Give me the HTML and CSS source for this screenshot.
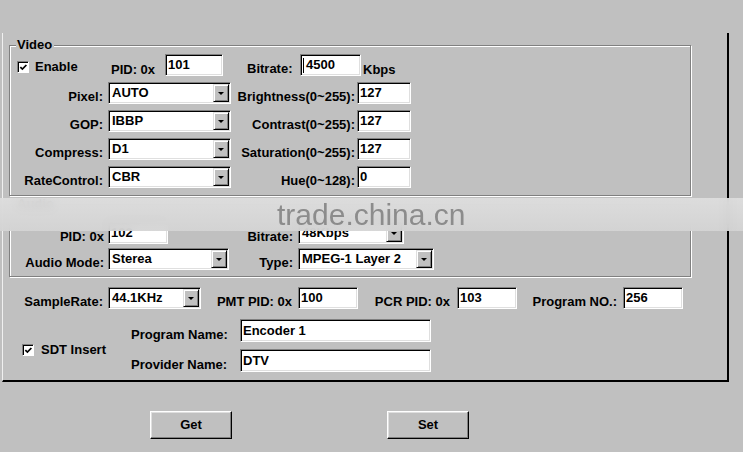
FILE: index.html
```html
<!DOCTYPE html>
<html>

<head>
    <title>Encoder Settings</title>
    <link rel="stylesheet" href="styles.css">
</head>

<body>

    <div class="panel">
        <div class="group video">
            <span class="legend">Video</span>
            <div class="row">
                <label class="enable"><span class="check"><svg viewBox="0 0 10 10"><polyline points="1.5,4.5 3.8,6.8 8.2,2.2" /></svg></span>Enable</label>
                <span class="lbl pid-lbl">PID: 0x</span>
                <span class="field w58">101</span>
                <span class="lbl bit-lbl">Bitrate:</span>
                <span class="field w61"><i class="caret"></i>4500</span>
                <span class="lbl unit">Kbps</span>
            </div>
            <div class="row">
                <span class="lbl va">Pixel:</span>
                <span class="combo w123">AUTO<b class="drop"></b></span>
                <span class="lbl vb">Brightness(0~255):</span>
                <span class="field w54">127</span>
            </div>
            <div class="row">
                <span class="lbl va">GOP:</span>
                <span class="combo w123">IBBP<b class="drop"></b></span>
                <span class="lbl vb">Contrast(0~255):</span>
                <span class="field w54">127</span>
            </div>
            <div class="row">
                <span class="lbl va">Compress:</span>
                <span class="combo w123">D1<b class="drop"></b></span>
                <span class="lbl vb">Saturation(0~255):</span>
                <span class="field w54">127</span>
            </div>
            <div class="row">
                <span class="lbl va">RateControl:</span>
                <span class="combo w123">CBR<b class="drop"></b></span>
                <span class="lbl vb">Hue(0~128):</span>
                <span class="field w54">0</span>
            </div>
        </div>

        <div class="group audio">
            <span class="legend">Audio</span>
            <div class="row">
                <span class="lbl aa">PID: 0x</span>
                <span class="field w60">102</span>
                <span class="lbl ab">Bitrate:</span>
                <span class="combo w106">48Kbps<b class="drop"></b></span>
            </div>
            <div class="row">
                <span class="lbl aa">Audio Mode:</span>
                <span class="combo w121">Sterea<b class="drop"></b></span>
                <span class="lbl ac">Type:</span>
                <span class="combo w136">MPEG-1 Layer 2<b class="drop"></b></span>
            </div>
        </div>

        <div class="row sample">
            <span class="lbl sr">SampleRate:</span>
            <span class="combo w93">44.1KHz<b class="drop"></b></span>
            <span class="lbl pmt">PMT PID: 0x</span>
            <span class="field w60">100</span>
            <span class="lbl pcr">PCR PID: 0x</span>
            <span class="field w60">103</span>
            <span class="lbl pno">Program NO.:</span>
            <span class="field w60">256</span>
        </div>

        <div class="names">
            <label class="sdt"><span class="check"><svg viewBox="0 0 10 10"><polyline points="1.5,4.5 3.8,6.8 8.2,2.2" /></svg></span>SDT Insert</label>
            <div class="name-grid">
                <span class="lbl">Program Name:</span>
                <span class="field">Encoder 1</span>
                <span class="lbl">Provider Name:</span>
                <span class="field">DTV</span>
            </div>
        </div>
    </div>

    <div class="buttons">
        <button>Get</button>
        <button>Set</button>
    </div>

    <div class="watermark">trade.china.cn</div>

</body>
</html>
```

FILE: styles.css
```css
body {
    margin: 0;
    padding: 33px 0 0 2px;
    height: 452px;
    box-sizing: border-box;
    overflow: hidden;
    position: relative;
    background-color: #c0c0c0;
    font: bold 13px/14px "Liberation Sans", Arial, sans-serif;
    color: #000;
}

.panel {
    width: 724px;
    padding: 12px 0 8px;
    border-left: 1px solid #f0f0f0;
    border-right: 2px solid #000;
    border-bottom: 2px solid #000;
}

/* etched group boxes */
.group {
    position: relative;
    margin-left: 6px;
    width: 682px;
    box-sizing: border-box;
    border: 1px solid #808080;
    box-shadow: inset 1px 1px #fff, 1px 1px #fff;
    display: flex;
    flex-direction: column;
}

.video {
    padding: 8px 0 7px;
    gap: 6px;
}

.audio {
    margin-top: 8px;
    padding: 17px 0 6px;
    gap: 4px;
}

.legend {
    position: absolute;
    left: 6px;
    top: -8px;
    padding: 0 2px 0 1px;
    background-color: #c0c0c0;
}

.row {
    display: flex;
    align-items: flex-end;
    height: 22px;
}

.lbl {
    flex: none;
    white-space: nowrap;
    box-sizing: border-box;
}

/* sunken fields */
.field,
.combo {
    flex: none;
    box-sizing: border-box;
    height: 22px;
    display: flex;
    align-items: center;
    white-space: nowrap;
    background-color: #fff;
    border: 1px solid;
    border-color: #808080 #fff #fff #808080;
    box-shadow: inset 1px 1px #000, inset -1px -1px #dfdfdf;
    padding: 1px 2px;
}

.combo {
    padding: 1px 1px 1px 3px;
}

.drop {
    margin-left: auto;
    width: 16px;
    height: 18px;
    box-sizing: border-box;
    display: flex;
    align-items: center;
    justify-content: center;
    background-color: #c0c0c0;
    border: 1px solid;
    border-color: #dfdfdf #000 #000 #dfdfdf;
    box-shadow: inset 1px 1px #fff, inset -1px -1px #808080;
}

.drop::after {
    content: "";
    border-left: 3px solid transparent;
    border-right: 3px solid transparent;
    border-top: 3px solid #000;
}

.caret {
    width: 1px;
    height: 15px;
    background-color: #000;
    margin-right: 2px;
}

.w54 { width: 54px; }
.w58 { width: 58px; }
.w60 { width: 60px; }
.w61 { width: 61px; }
.w93 { width: 93px; }
.w106 { width: 106px; }
.w121 { width: 121px; }
.w123 { width: 123px; }
.w136 { width: 136px; }

.check {
    flex: none;
    width: 12px;
    height: 12px;
    box-sizing: border-box;
    background-color: #fff;
    border: 1px solid;
    border-color: #808080 #fff #fff #808080;
    box-shadow: inset 1px 1px #000;
    display: flex;
    align-items: center;
    justify-content: center;
}

.check svg {
    width: 9px;
    height: 9px;
    margin: 1px 0 0 1px;
    fill: none;
    stroke: #000;
    stroke-width: 1.9;
}

/* video rows */
.enable {
    width: 101px;
    padding-left: 7px;
    box-sizing: border-box;
    margin-bottom: 2px;
    display: flex;
    align-items: center;
    gap: 6px;
}

.pid-lbl {
    width: 54px;
    margin-bottom: -1px;
}

.bit-lbl {
    width: 53px;
    margin-left: 24px;
}

.unit {
    margin-left: 2px;
    margin-bottom: -1px;
}

.va {
    width: 93px;
    margin-right: 5px;
    text-align: right;
}

.vb {
    width: 126px;
    padding-right: 2px;
    text-align: right;
}

/* audio rows */
.aa {
    width: 94px;
    margin-right: 4px;
    text-align: right;
}

.ab {
    width: 130px;
    padding-right: 5px;
    text-align: right;
}

.ac {
    width: 69px;
    padding-right: 5px;
    text-align: right;
}

/* program info */
.sample {
    margin-top: 10px;
    padding-left: 19px;
}

.sr {
    width: 81px;
    margin-right: 5px;
    text-align: right;
}

.pmt {
    width: 97px;
    padding-right: 6px;
    text-align: right;
}

.pcr {
    width: 99px;
    padding-right: 7px;
    text-align: right;
}

.pno {
    width: 106px;
    padding-right: 6px;
    text-align: right;
}

.names {
    display: flex;
    margin-top: 10px;
}

.sdt {
    width: 128px;
    padding: 9px 0 0 19px;
    box-sizing: border-box;
    display: flex;
    align-items: center;
    gap: 7px;
}

.name-grid {
    display: grid;
    grid-template-columns: 109px 191px;
    grid-auto-rows: 23px;
    row-gap: 7px;
}

.name-grid .lbl {
    align-self: end;
}

.name-grid .field {
    height: 23px;
}

.buttons {
    display: flex;
    gap: 155px;
    padding-left: 148px;
    margin-top: 29px;
}

button {
    width: 82px;
    height: 28px;
    padding: 0;
    font: inherit;
    color: #000;
    background-color: #c0c0c0;
    border: 1px solid;
    border-color: #fff #000 #000 #fff;
    box-shadow: inset -1px -1px #808080, inset 1px 1px #dfdfdf;
}

.watermark {
    position: absolute;
    left: 0;
    top: 198px;
    width: 743px;
    height: 33px;
    box-sizing: border-box;
    padding-left: 277px;
    background: linear-gradient(rgba(222, 222, 222, 0.93), rgba(212, 212, 212, 0.93));
    backdrop-filter: blur(4px);
    font: normal 30px/33px "Liberation Sans", Arial, sans-serif;
    color: #8c8c8c;
}
```
